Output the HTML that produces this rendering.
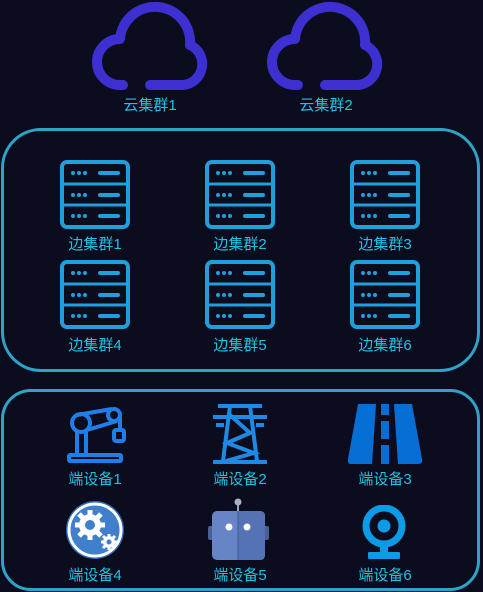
<!DOCTYPE html>
<html><head><meta charset="utf-8"><style>
*{margin:0;padding:0;box-sizing:border-box}
body{width:483px;height:592px;background:#0b0c1e;position:relative;overflow:hidden;font-family:"Liberation Sans","Noto Sans CJK SC",sans-serif}
.a{position:absolute}
.lbl{position:absolute;width:120px;text-align:center;color:#1ec3e6;font-size:15px;line-height:18px}
.box{position:absolute;border:3px solid #2ea3c8}
</style></head><body>
<svg class="a" style="left:88px;top:0" width="126" height="92" viewBox="-2 0 126 92"><path d="M33 85 H30 A23 23 0 0 1 30 39 A35 35 0 0 1 100 45 A21 21 0 0 1 93 85 H60" fill="none" stroke="#3d2fd0" stroke-width="10" stroke-linecap="round" stroke-linejoin="round"/></svg>
<svg class="a" style="left:263px;top:0" width="126" height="92" viewBox="-2 0 126 92"><path d="M33 85 H30 A23 23 0 0 1 30 39 A35 35 0 0 1 100 45 A21 21 0 0 1 93 85 H60" fill="none" stroke="#3d2fd0" stroke-width="10" stroke-linecap="round" stroke-linejoin="round"/></svg>
<div class="lbl" style="left:90px;top:97px">云集群1</div>
<div class="lbl" style="left:266px;top:97px">云集群2</div>

<div class="box" style="left:1px;top:128px;width:479px;height:244px;border-radius:40px"></div>
<div class="box" style="left:1px;top:389px;width:479px;height:202px;border-radius:30px"></div>

<svg width="0" height="0" style="position:absolute"><defs><g id="srv"><rect x="2" y="2" width="66" height="65" rx="5" fill="none" stroke="#1fa0dc" stroke-width="4"/><path d="M2 24H68M2 45H68" stroke="#1fa0dc" stroke-width="3"/><g fill="#1fa0dc"><circle cx="13" cy="13" r="2"/><circle cx="19" cy="13" r="2"/><circle cx="25" cy="13" r="2"/><rect x="38" y="11" width="22" height="4" rx="2"/><circle cx="13" cy="35" r="2"/><circle cx="19" cy="35" r="2"/><circle cx="25" cy="35" r="2"/><rect x="38" y="33" width="22" height="4" rx="2"/><circle cx="13" cy="56" r="2"/><circle cx="19" cy="56" r="2"/><circle cx="25" cy="56" r="2"/><rect x="38" y="54" width="22" height="4" rx="2"/></g></g></defs></svg>
<svg class="a" style="left:60px;top:160px" width="70" height="70"><use href="#srv"/></svg>
<svg class="a" style="left:205px;top:160px" width="70" height="70"><use href="#srv"/></svg>
<svg class="a" style="left:350px;top:160px" width="70" height="70"><use href="#srv"/></svg>
<svg class="a" style="left:60px;top:260px" width="70" height="70"><use href="#srv"/></svg>
<svg class="a" style="left:205px;top:260px" width="70" height="70"><use href="#srv"/></svg>
<svg class="a" style="left:350px;top:260px" width="70" height="70"><use href="#srv"/></svg>
<div class="lbl" style="left:35px;top:236px">边集群1</div>
<div class="lbl" style="left:180px;top:236px">边集群2</div>
<div class="lbl" style="left:325px;top:236px">边集群3</div>
<div class="lbl" style="left:35px;top:337px">边集群4</div>
<div class="lbl" style="left:180px;top:337px">边集群5</div>
<div class="lbl" style="left:325px;top:337px">边集群6</div>

<!-- robot arm -->
<svg class="a" style="left:65px;top:403px" width="62" height="62" viewBox="0 0 62 62" fill="none" stroke="#1e7fe8" stroke-width="4">
<circle cx="16" cy="20" r="9"/><circle cx="49" cy="12" r="6"/><path d="M12 12 L47 6 M22 27 L52 18 M55 14 V27"/><rect x="49" y="27" width="10" height="11" rx="2"/><path d="M12 29 V52 M21 29 V52"/><rect x="4" y="52" width="52" height="6" rx="1"/></svg>
<!-- tower -->
<svg class="a" style="left:210px;top:403px" width="60" height="62" viewBox="0 0 60 62" fill="none" stroke="#1e8ae6" stroke-width="4">
<path d="M8 3H52M3 14H57M6 22H14M46 22H54M20 3L13 58M40 3L47 58M20 12L40 30L17 40L44 50L16 58M3 59H57"/></svg>
<!-- road -->
<svg class="a" style="left:347px;top:403px" width="76" height="62" viewBox="0 0 76 62">
<path d="M11 1H29L25 61H4Q0 61 1 56Z" fill="#066fd6"/><path d="M47 1H65L75 56Q76 61 71 61H51Z" fill="#066fd6"/><path d="M34 1H42V12H34ZM34 18H42V36H34ZM34 42H42V61H34Z" fill="#066fd6"/></svg>
<div class="lbl" style="left:35px;top:471px">端设备1</div>
<div class="lbl" style="left:180px;top:471px">端设备2</div>
<div class="lbl" style="left:325px;top:471px">端设备3</div>

<!-- gears -->
<svg class="a" style="left:65px;top:500px" width="60" height="60" viewBox="0 0 60 60">
<circle cx="30" cy="30" r="29" fill="#2f68b8"/><circle cx="30" cy="30" r="26" fill="#3f7fcc" stroke="#fff" stroke-width="3"/>
<g fill="#fff"><circle cx="25" cy="25" r="11"/><g stroke="#fff" stroke-width="5"><path d="M25 10V40M10 25H40M14 14L36 36M36 14L14 36"/></g><circle cx="44" cy="42" r="6"/><g stroke="#fff" stroke-width="3"><path d="M44 34V50M36 42H52M38 36L50 48M50 36L38 48"/></g></g>
<circle cx="25" cy="25" r="5" fill="#3f7fcc"/><circle cx="44" cy="42" r="2.5" fill="#3f7fcc"/></svg>
<!-- robot -->
<svg class="a" style="left:208px;top:498px" width="62" height="64" viewBox="0 0 62 64">
<line x1="30" y1="4" x2="30" y2="14" stroke="#9aa3b8" stroke-width="2"/><circle cx="30" cy="4" r="3.5" fill="#a8b0c4"/>
<rect x="0" y="28" width="6" height="14" rx="2" fill="#4a5f94"/><rect x="55" y="28" width="6" height="14" rx="2" fill="#4a5f94"/>
<rect x="4" y="13" width="53" height="49" rx="5" fill="#6684c6"/><path d="M30 13H52Q57 13 57 18V57Q57 62 52 62H30Z" fill="#5472b4"/><line x1="30" y1="13" x2="30" y2="62" stroke="#42598f"/>
<circle cx="21" cy="29" r="3.5" fill="#fff"/><circle cx="39" cy="29" r="3.5" fill="#fff"/></svg>
<!-- webcam -->
<svg class="a" style="left:360px;top:505px" width="50" height="56" viewBox="0 0 50 56">
<circle cx="24" cy="21" r="18" fill="none" stroke="#0c9be6" stroke-width="7"/><circle cx="24" cy="21" r="6.5" fill="#0c9be6"/><rect x="20" y="39" width="8" height="9" fill="#0c9be6"/><rect x="8" y="47" width="32" height="7" rx="1" fill="#0c9be6"/></svg>
<div class="lbl" style="left:35px;top:567px">端设备4</div>
<div class="lbl" style="left:180px;top:567px">端设备5</div>
<div class="lbl" style="left:325px;top:567px">端设备6</div>
</body></html>
